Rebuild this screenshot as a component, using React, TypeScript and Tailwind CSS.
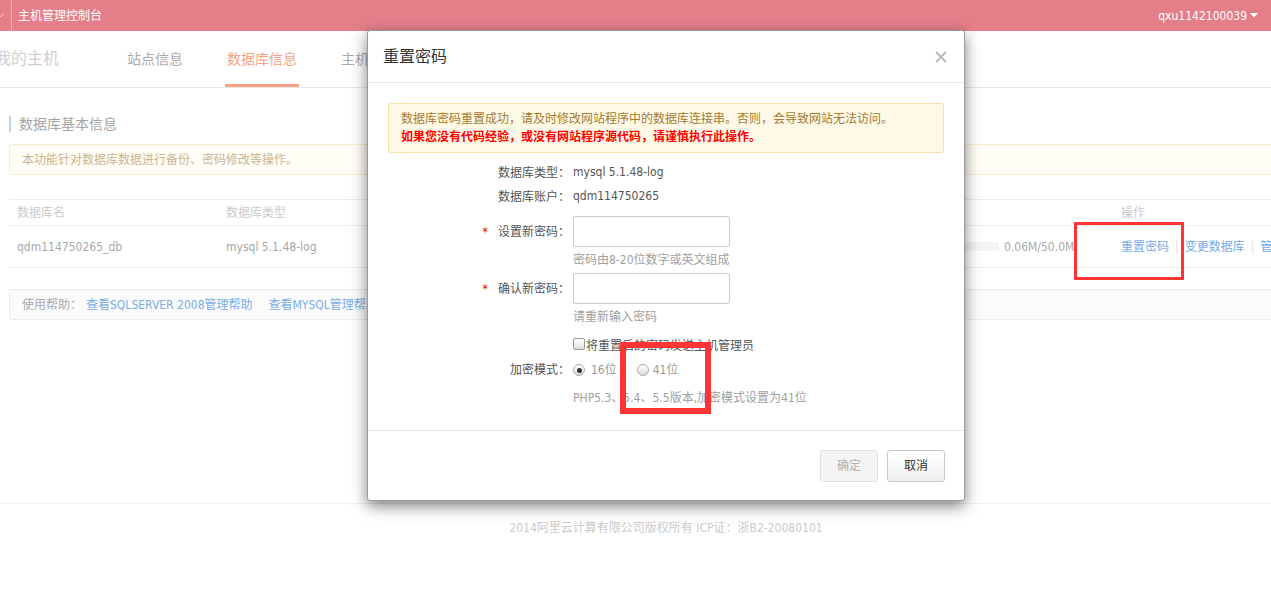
import { ChevronDown } from "lucide-react";

const font = "font-['DejaVu_Sans_Condensed','Liberation_Sans','Noto_Sans_CJK_SC',sans-serif]";

function Radio({ checked }: { checked?: boolean }) {
  return (
    <span className="flex size-[12px] items-center justify-center rounded-full border border-[#a8a8a8] bg-gradient-to-b from-white to-[#dcdcdc]">
      {checked && <span className="size-[5px] rounded-full bg-[#333]" />}
    </span>
  );
}

function FormRow({ label, star, children, className = "" }: { label?: string; star?: boolean; children: React.ReactNode; className?: string }) {
  return (
    <div className={`flex items-center ${className}`}>
      <div className="flex w-[182px] shrink-0 items-center justify-end text-[12px] text-[#555]">
        {star && <span className="mr-[10px] text-[12px] text-[#e00]">*</span>}
        {label}
      </div>
      <div className="ml-[3px] flex items-center">{children}</div>
    </div>
  );
}

export default function App() {
  return (
    <div className={`relative h-[592px] w-[1271px] overflow-hidden bg-white ${font}`}>
      {/* top bar */}
      <div className="flex h-[31px] items-center bg-[#e47f8a] text-white">
        <div className="flex h-full items-center">
          <ChevronDown className="-ml-[5px] size-[11px] text-white/80" strokeWidth={2} />
          <div className="ml-[5px] h-full w-px bg-[#f2b3ba]" />
        </div>
        <span className="ml-[6px] text-[12px]">主机管理控制台</span>
        <div className="ml-auto mr-[13px] flex items-center gap-[3px] text-[12px]">
          qxu1142100039
          <svg width="8" height="5" viewBox="0 0 8 5"><path d="M0 0h8L4 4.5z" fill="#fff" /></svg>
        </div>
      </div>

      <div className="w-[1332px]">
        {/* sub nav */}
        <div className="flex h-[57px] items-end border-b border-[#e8e8e8]">
          <div className="-ml-[5px] flex h-full w-[130px] items-center text-[16px] text-[#cfcfcf]">我的主机</div>
          <div className="flex h-full gap-[40px] text-[14px]">
            <div className="flex items-center px-[2px] text-[#a9a9a9]">站点信息</div>
            <div className="flex items-center border-b-[3px] border-[#f7a383] px-[2px] pt-[3px] text-[#f7a383]">数据库信息</div>
            <div className="flex items-center px-[2px] text-[#a9a9a9]">主机信息</div>
          </div>
        </div>

        {/* content */}
        <div className="px-[9px] pt-[28px]">
          <div className="border-l-2 border-[#b7d3ee] pl-[8px] text-[14px] leading-[16px] text-[#a5a5a5]">数据库基本信息</div>
          <div className="mt-[12px] flex h-[31px] items-center rounded-[3px] border border-[#fbecc9] bg-[#fffdf5] pl-[12px] text-[12px] text-[#c9b592]">
            本功能针对数据库数据进行备份、密码修改等操作。
          </div>

          <div className="mt-[24px] border-t border-[#ececec] text-[12px]">
            <div className="flex h-[26px] items-center border-b border-[#ececec] text-[#cbcbcb]">
              <div className="w-[217px] pl-[8px]">数据库名</div>
              <div className="w-[640px]">数据库类型</div>
              <div className="w-[255px]">使用量</div>
              <div>操作</div>
            </div>
            <div className="flex h-[42px] items-center border-b border-[#ececec] text-[#a8a8a8]">
              <div className="w-[217px] pl-[8px]">qdm114750265_db</div>
              <div className="w-[640px]">mysql 5.1.48-log</div>
              <div className="flex w-[255px] items-center">
                <div className="h-[9px] w-[133px] bg-[#f4f4f4]" />
                <span className="ml-[5px]">0.06M/50.0M</span>
              </div>
              <div className="flex items-center text-[#75acea]">
                <span>重置密码</span>
                <span className="mx-[6px] text-[#dedede]">|</span>
                <span>变更数据库</span>
                <span className="mx-[6px] text-[#dedede]">|</span>
                <span>管理</span>
              </div>
            </div>
          </div>

          <div className="mt-[21px] flex h-[31px] items-center rounded-[3px] border border-[#ebebeb] bg-[#fbfbfb] pl-[12px] text-[12px]">
            <span className="text-[#a9a9a9]">使用帮助：</span>
            <span className="ml-[4px] text-[#78ade8]">查看SQLSERVER 2008管理帮助</span>
            <span className="ml-[16px] text-[#78ade8]">查看MYSQL管理帮助</span>
          </div>
        </div>

        {/* footer */}
        <div className="mt-[183px] border-t border-[#efefef] pt-[15px] text-center text-[12px] text-[#cacaca]">
          2014阿里云计算有限公司版权所有 ICP证：浙B2-20080101
        </div>
      </div>

      {/* modal */}
      <div className="absolute inset-y-0 left-0 w-[1332px]">
        <div className="mx-auto mt-[30px] w-[598px] rounded-[3px] border border-[#999] bg-white shadow-[0_5px_15px_rgba(0,0,0,0.5)]">
          <div className="flex h-[52px] items-center justify-between border-b border-[#e5e5e5] pl-[15px] pr-[16px]">
            <span className="text-[16px] text-[#333]">重置密码</span>
            <svg width="12" height="12" viewBox="0 0 12 12" className="mr-[1px]">
              <path d="M1 1l10 10M11 1L1 11" stroke="#bbb" strokeWidth="2" />
            </svg>
          </div>

          <div className="px-[20px] pb-[23px] pt-[20px]">
            <div className="rounded-[3px] border border-[#f7e1a7] bg-[#fdf9e6] px-[12px] py-[6px] text-[12px] leading-[18px]">
              <div className="text-[#a57a32]">数据库密码重置成功，请及时修改网站程序中的数据库连接串。否则，会导致网站无法访问。</div>
              <div className="font-bold text-[#f00]">如果您没有代码经验，或没有网站程序源代码，请谨慎执行此操作。</div>
            </div>

            <FormRow label="数据库类型：" className="mt-[8px] h-[24px]">
              <span className="-mt-[3px] text-[12px] text-[#555]">mysql 5.1.48-log</span>
            </FormRow>
            <FormRow label="数据库账户：" className="h-[24px]">
              <span className="-mt-[3px] text-[12px] text-[#555]">qdm114750265</span>
            </FormRow>
            <FormRow label="设置新密码：" star className="mt-[7px] h-[31px]">
              <div className="h-[31px] w-[157px] rounded-[2px] border border-[#ccc] bg-white" />
            </FormRow>
            <FormRow className="mt-[4px] h-[18px]">
              <span className="text-[12px] text-[#a0a0a0]">密码由8-20位数字或英文组成</span>
            </FormRow>
            <FormRow label="确认新密码：" star className="mt-[4px] h-[31px]">
              <div className="h-[31px] w-[157px] rounded-[2px] border border-[#ccc] bg-white" />
            </FormRow>
            <FormRow className="mt-[4px] h-[18px]">
              <span className="text-[12px] text-[#a0a0a0]">请重新输入密码</span>
            </FormRow>
            <FormRow className="mt-[10px] h-[20px]">
              <span className="-mt-[4px] size-[12px] rounded-[2px] border border-[#999] bg-gradient-to-b from-white to-[#dedede]" />
              <span className="ml-[1px] text-[12px] text-[#555]">将重置后的密码发送主机管理员</span>
            </FormRow>
            <FormRow label="加密模式：" className="mt-[4px] h-[20px]">
              <Radio checked />
              <span className="ml-[6px] text-[12px] text-[#999]">16位</span>
              <span className="ml-[20px]"><Radio /></span>
              <span className="ml-[4px] text-[12px] text-[#999]">41位</span>
            </FormRow>
            <FormRow className="mt-[9px] h-[18px]">
              <span className="text-[12px] text-[#a0a0a0]">PHP5.3、5.4、5.5版本,加密模式设置为41位</span>
            </FormRow>
          </div>

          <div className="flex h-[70px] justify-end gap-[9px] border-t border-[#e5e5e5] pr-[19px] pt-[19px]">
            <button type="button" className="h-[32px] w-[58px] rounded-[3px] border border-[#e0e0e0] bg-[#f5f5f5] text-[12px] text-[#b0b0b0]">确定</button>
            <button type="button" className="h-[32px] w-[58px] rounded-[3px] border border-[#c8c8c8] bg-gradient-to-b from-white to-[#f0f0f0] text-[12px] text-[#333]">取消</button>
          </div>
        </div>
      </div>

      {/* annotation boxes */}
      <div className="absolute left-[1074px] top-[222px] h-[58px] w-[110px] border-[3px] border-[#ff3535]" />
      <div className="absolute left-[620px] top-[342px] h-[72px] w-[91px] border-[6px] border-[#ff3535]" />
    </div>
  );
}
